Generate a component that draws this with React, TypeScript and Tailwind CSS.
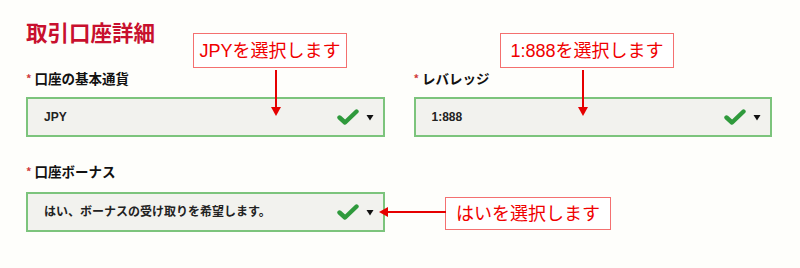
import React from "react";

const jp = { fontFamily: '"Noto Sans CJK JP", "Noto Sans", sans-serif' };
const mix = { fontFamily: '"Liberation Sans", "Noto Sans CJK JP", sans-serif' };

function Check() {
  return (
    <svg width="22" height="18" viewBox="0 0 22 18" className="shrink-0">
      <path d="M2.5 9.5 L8 14.5 L19.5 3.5" fill="none" stroke="#2f9a3c" strokeWidth="4.4" strokeLinecap="round" strokeLinejoin="round" />
    </svg>
  );
}

function Tri() {
  return (
    <svg width="8" height="7" viewBox="0 0 8 7" className="shrink-0">
      <path d="M0.5 1 L7.5 1 L4 6.5 Z" fill="#111" />
    </svg>
  );
}

function Select({ value }: { value: string }) {
  return (
    <div className="flex h-[40px] items-center border-2 border-[#7cc47c] bg-[#f2f2ee] pl-[16px] pr-[9px]">
      <span className="flex-1 text-[12px] font-bold text-[#222]" style={mix}>
        {value}
      </span>
      <Check />
      <span className="ml-[7px] flex items-center">
        <Tri />
      </span>
    </div>
  );
}

function Label({ text }: { text: string }) {
  return (
    <div className="flex h-[16px] items-center text-[13.5px] font-bold leading-[16px] text-[#111]" style={jp}>
      <span className="mr-[3px] text-[11px] text-[#d03a3a]">*</span>
      {text}
    </div>
  );
}

function Callout({ text, className }: { text: string; className: string }) {
  return (
    <div
      className={"absolute flex items-center justify-center border-[1.5px] border-[#f47070] bg-white text-[18px] leading-none text-[#f00000] " + className}
      style={mix}
    >
      {text}
    </div>
  );
}

export default function App() {
  return (
    <div className="relative h-[268px] w-[800px] overflow-hidden bg-[#fefefb] pl-[26px] pt-[19px]">
      <h1 className="text-[21.5px] font-bold leading-[26px] text-[#c8102e]" style={jp}>
        取引口座詳細
      </h1>
      <div className="mt-[25px] grid w-[746px] grid-cols-2 gap-x-[29px]">
        <div>
          <Label text="口座の基本通貨" />
          <div className="mt-[11px]">
            <Select value="JPY" />
          </div>
        </div>
        <div>
          <Label text="レバレッジ" />
          <div className="mt-[11px]">
            <Select value="1:888" />
          </div>
        </div>
        <div className="mt-[26px]">
          <Label text="口座ボーナス" />
          <div className="mt-[13px]">
            <Select value="はい、ボーナスの受け取りを希望します。" />
          </div>
        </div>
      </div>

      <Callout text="JPYを選択します" className="left-[193px] top-[33px] h-[35px] w-[154px]" />
      <Callout text="1:888を選択します" className="left-[500px] top-[33px] h-[35px] w-[174px]" />
      <Callout text="はいを選択します" className="left-[445px] top-[197px] h-[33px] w-[166px]" />

      <svg className="absolute left-0 top-0" width="800" height="268" viewBox="0 0 800 268">
        <g stroke="#e60000" strokeWidth="2" fill="none">
          <line x1="276" y1="70" x2="276" y2="112" />
          <line x1="583" y1="70" x2="583" y2="112" />
          <line x1="446" y1="212" x2="384" y2="212" />
        </g>
        <g fill="#e60000">
          <path d="M271 107 L281 107 L276 116 Z" />
          <path d="M578 107 L588 107 L583 116 Z" />
          <path d="M388 207 L388 217 L379 212 Z" />
        </g>
      </svg>
    </div>
  );
}
